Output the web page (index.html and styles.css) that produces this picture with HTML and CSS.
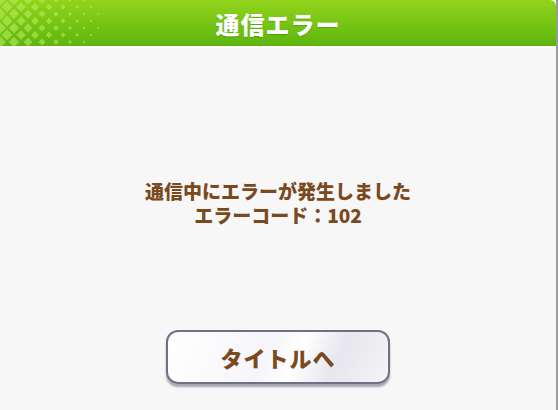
FILE: index.html
```html
<!DOCTYPE html>
<html lang="ja">
<head>
    <meta charset="UTF-8">
    <meta name="viewport" content="width=device-width, initial-scale=1.0">
    <title>通信エラー</title>
    <link rel="stylesheet" href="styles.css">
</head>
<body>
    <div class="dialog">
        <div class="header">
            <!-- halftone diamonds, shrinking to the right -->
            <svg class="pattern" width="110" height="46" viewBox="0 0 110 46">
                <g fill="#b9ec5e">
                    <path d="M0,-6l6,6l-6,6l-6,-6z M0,8l6,6l-6,6l-6,-6z M0,22l6,6l-6,6l-6,-6z M0,36l6,6l-6,6l-6,-6z"/>
                    <path d="M7,1.4l5.6,5.6l-5.6,5.6l-5.6,-5.6z M7,15.4l5.6,5.6l-5.6,5.6l-5.6,-5.6z M7,29.4l5.6,5.6l-5.6,5.6l-5.6,-5.6z"/>
                    <path d="M14,-5.2l5.2,5.2l-5.2,5.2l-5.2,-5.2z M14,8.8l5.2,5.2l-5.2,5.2l-5.2,-5.2z M14,22.8l5.2,5.2l-5.2,5.2l-5.2,-5.2z M14,36.8l5.2,5.2l-5.2,5.2l-5.2,-5.2z"/>
                    <path d="M21,2.2l4.8,4.8l-4.8,4.8l-4.8,-4.8z M21,16.2l4.8,4.8l-4.8,4.8l-4.8,-4.8z M21,30.2l4.8,4.8l-4.8,4.8l-4.8,-4.8z"/>
                    <path d="M28,-4.4l4.4,4.4l-4.4,4.4l-4.4,-4.4z M28,9.6l4.4,4.4l-4.4,4.4l-4.4,-4.4z M28,23.6l4.4,4.4l-4.4,4.4l-4.4,-4.4z M28,37.6l4.4,4.4l-4.4,4.4l-4.4,-4.4z"/>
                    <path d="M35,3l4,4l-4,4l-4,-4z M35,17l4,4l-4,4l-4,-4z M35,31l4,4l-4,4l-4,-4z"/>
                    <path d="M42,-3.6l3.6,3.6l-3.6,3.6l-3.6,-3.6z M42,10.4l3.6,3.6l-3.6,3.6l-3.6,-3.6z M42,24.4l3.6,3.6l-3.6,3.6l-3.6,-3.6z M42,38.4l3.6,3.6l-3.6,3.6l-3.6,-3.6z"/>
                    <path d="M49,3.8l3.2,3.2l-3.2,3.2l-3.2,-3.2z M49,17.8l3.2,3.2l-3.2,3.2l-3.2,-3.2z M49,31.8l3.2,3.2l-3.2,3.2l-3.2,-3.2z"/>
                    <path d="M56,-2.8l2.8,2.8l-2.8,2.8l-2.8,-2.8z M56,11.2l2.8,2.8l-2.8,2.8l-2.8,-2.8z M56,25.2l2.8,2.8l-2.8,2.8l-2.8,-2.8z M56,39.2l2.8,2.8l-2.8,2.8l-2.8,-2.8z"/>
                    <path d="M63,4.6l2.4,2.4l-2.4,2.4l-2.4,-2.4z M63,18.6l2.4,2.4l-2.4,2.4l-2.4,-2.4z M63,32.6l2.4,2.4l-2.4,2.4l-2.4,-2.4z"/>
                    <path d="M70,-2l2,2l-2,2l-2,-2z M70,12l2,2l-2,2l-2,-2z M70,26l2,2l-2,2l-2,-2z M70,40l2,2l-2,2l-2,-2z"/>
                    <path d="M77,5.2l1.8,1.8l-1.8,1.8l-1.8,-1.8z M77,19.2l1.8,1.8l-1.8,1.8l-1.8,-1.8z M77,33.2l1.8,1.8l-1.8,1.8l-1.8,-1.8z"/>
                    <path d="M84,-1.6l1.6,1.6l-1.6,1.6l-1.6,-1.6z M84,12.4l1.6,1.6l-1.6,1.6l-1.6,-1.6z M84,26.4l1.6,1.6l-1.6,1.6l-1.6,-1.6z M84,40.4l1.6,1.6l-1.6,1.6l-1.6,-1.6z"/>
                    <path d="M91,5.6l1.4,1.4l-1.4,1.4l-1.4,-1.4z M91,19.6l1.4,1.4l-1.4,1.4l-1.4,-1.4z M91,33.6l1.4,1.4l-1.4,1.4l-1.4,-1.4z"/>
                    <path d="M98,12.8l1.2,1.2l-1.2,1.2l-1.2,-1.2z M98,26.8l1.2,1.2l-1.2,1.2l-1.2,-1.2z"/>
                </g>
            </svg>
            <h1 class="title">通信エラー</h1>
        </div>
        <div class="content">
            <div class="message">
                <div>通信中にエラーが発生しました</div>
                <div>エラーコード：102</div>
            </div>
            <button class="btn">タイトルへ</button>
        </div>
    </div>
</body>
</html>
```

FILE: styles.css
```css
body {
    margin: 0;
    background-color: #f7f7f7;
    font-family: "Noto Sans CJK JP", "Noto Sans", sans-serif;
}
.dialog {
    width: 556px;
    height: 410px;
    border-right: 2px solid #9a9a9a;
    display: flex;
    flex-direction: column;
}
.header {
    position: relative;
    height: 46px;
    background: linear-gradient(#93d41c, #6cbf12 70%, #5fb40e);
    border-top-right-radius: 6px;
    border-bottom: 2px solid #ffffff;
    display: flex;
    justify-content: center;
    align-items: center;
    overflow: hidden;
}
.pattern {
    position: absolute;
    left: 0;
    top: 0;
    opacity: 0.6;
}
.title {
    position: relative;
    margin: 0;
    color: #ffffff;
    font-size: 24px;
    font-weight: 900;
    letter-spacing: 1px;
    text-shadow: 0 1px 1px rgba(60, 110, 0, 0.4);
}
.content {
    flex: 1;
    display: flex;
    flex-direction: column;
    align-items: center;
    padding-top: 131px;
}
.message {
    text-align: center;
    color: #7a4a1f;
    font-size: 19px;
    font-weight: 900;
    line-height: 24px;
}
.btn {
    margin-top: 103px;
    width: 224px;
    height: 54px;
    border: 2px solid #6e7088;
    border-radius: 12px;
    background: linear-gradient(115deg, #ffffff 0%, #f6f6fa 45%, #ffffff 58%, #e6e6ec 75%, #f4f4f8 100%);
    box-shadow: 0 3px 2px rgba(70, 72, 100, 0.45);
    color: #7a4a1f;
    font-family: "Noto Sans CJK JP", sans-serif;
    font-size: 22px;
    font-weight: 900;
    letter-spacing: 1px;
}
```
